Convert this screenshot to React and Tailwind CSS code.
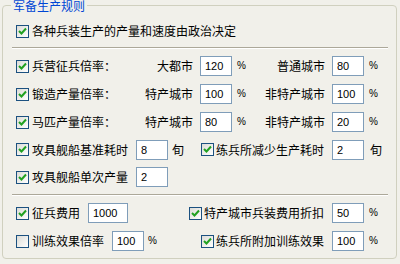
const Box = ({ checked }) => (
  <div className="w-[13px] h-[13px] shrink-0 border border-[#1c5180] bg-linear-to-br from-[#dcdcd7] to-white flex items-center justify-center">
    {checked && (
      <svg width="11" height="11" viewBox="0 0 11 11">
        <path d="M2 5 L4.5 7.5 L9 2.5" stroke="#21a121" strokeWidth="2" fill="none" />
      </svg>
    )}
  </div>
);

const Field = ({ value, w = 'w-[32px]', className = '' }) => (
  <div className={`${w} h-[20px] shrink-0 border border-[#7f9db9] bg-white pl-[4px] flex items-center text-[11px] font-['Liberation_Sans',sans-serif] ${className}`}>
    {value}
  </div>
);

const Pct = ({ className = '' }) => (
  <span className={`text-[10px] font-['Liberation_Sans',sans-serif] ${className}`}>%</span>
);

const RateRow = ({ label, a, av, b, bv }) => (
  <div className="h-[28px] flex items-center pl-[13px]">
    <Box checked />
    <span className="ml-[3px] w-[98px]">{label}</span>
    <span className="w-[63px] text-right">{a}</span>
    <Field value={av} className="ml-[7px]" />
    <Pct className="ml-[5px] w-[20px]" />
    <span className="w-[68px] text-right">{b}</span>
    <Field value={bv} className="ml-[7px]" />
    <Pct className="ml-[5px]" />
  </div>
);

const RightCheck = ({ label, w }) => (
  <div className={`${w} flex items-center justify-end pr-[8px]`}>
    <Box checked />
    <span className="ml-[2px]">{label}</span>
  </div>
);

export default function App() {
  return (
    <div className="w-[400px] h-[264px] overflow-hidden bg-[#f1f0ea] pt-[5px] text-[12px] leading-[14px] text-black font-['Noto_Sans_CJK_SC',sans-serif]">
      <div className="relative ml-[2px] w-[395px] border border-[#d0d0bf] rounded-[4px] pt-[15px] pb-[3px]">
        <span className="absolute left-[8px] top-[-6px] px-[2px] bg-[#f1f0ea] text-[#0046d5] leading-[12px]">
          军备生产规则
        </span>

        <div className="h-[20px] flex items-center pl-[13px]">
          <Box checked />
          <span className="ml-[3px]">各种兵装生产的产量和速度由政治决定</span>
        </div>

        <div className="mt-[6px] ml-[9px] w-[376px] h-[2px] border-t border-b border-t-[#aca899] border-b-white" />

        <div className="mt-[3px]">
          <RateRow label="兵营征兵倍率：" a="大都市" av="120" b="普通城市" bv="80" />
          <RateRow label="锻造产量倍率：" a="特产城市" av="100" b="非特产城市" bv="100" />
          <RateRow label="马匹产量倍率：" a="特产城市" av="80" b="非特产城市" bv="20" />

          <div className="h-[27px] flex items-center pl-[13px]">
            <Box checked />
            <span className="ml-[3px] w-[104px]">攻具舰船基准耗时</span>
            <Field value="8" />
            <span className="ml-[4px] w-[12px]">旬</span>
            <RightCheck label="练兵所减少生产耗时" w="w-[148px]" />
            <Field value="2" />
            <span className="ml-[6px]">旬</span>
          </div>

          <div className="h-[28px] flex items-center pl-[13px]">
            <Box checked />
            <span className="ml-[3px] w-[104px]">攻具舰船单次产量</span>
            <Field value="2" />
          </div>
        </div>

        <div className="mt-[3px] ml-[9px] w-[376px] h-[2px] border-t border-b border-t-[#aca899] border-b-white" />

        <div className="mt-[3px]">
          <div className="h-[28px] flex items-center pl-[13px]">
            <Box checked />
            <span className="ml-[3px] w-[56px]">征兵费用</span>
            <Field value="1000" w="w-[40px]" />
            <RightCheck label="特产城市兵装费用折扣" w="w-[204px]" />
            <Field value="50" />
            <Pct className="ml-[5px]" />
          </div>

          <div className="h-[28px] flex items-center pl-[13px]">
            <Box />
            <span className="ml-[3px] w-[80px]">训练效果倍率</span>
            <Field value="100" />
            <Pct className="ml-[4px] w-[20px]" />
            <RightCheck label="练兵所附加训练效果" w="w-[164px]" />
            <Field value="100" />
            <Pct className="ml-[5px]" />
          </div>
        </div>
      </div>
    </div>
  );
}
